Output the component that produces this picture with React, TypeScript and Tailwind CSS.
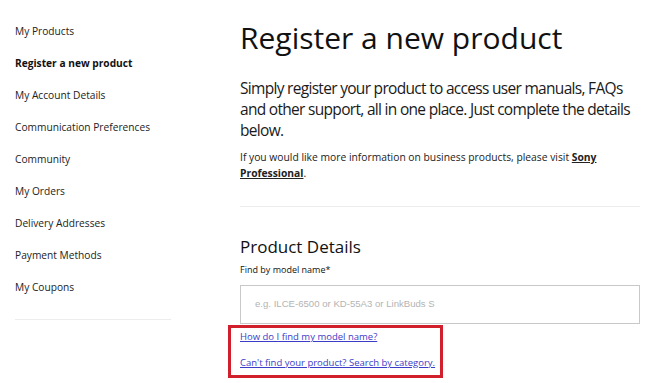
import React from 'react'

const navItems = [
  { label: 'My Products' },
  { label: 'Register a new product', active: true },
  { label: 'My Account Details' },
  { label: 'Communication Preferences' },
  { label: 'Community' },
  { label: 'My Orders' },
  { label: 'Delivery Addresses' },
  { label: 'Payment Methods' },
  { label: 'My Coupons' },
]

export default function App() {
  return (
    <main className="flex min-h-[383px] bg-white text-[#111] font-['Open_Sans',sans-serif]">
      <aside className="w-[240px] shrink-0 pl-[15px] pr-[69px] pt-[16px]">
        <ul>
          {navItems.map((item) => (
            <li
              key={item.label}
              className={`flex h-[32px] items-center text-[10.2px] ${item.active ? 'font-bold' : 'text-[#222]'}`}
            >
              {item.label}
            </li>
          ))}
        </ul>
        <div className="mt-[15px] border-t border-[#ececec]" />
      </aside>

      <section className="w-[400px] shrink-0 pt-[17px]">
        <h1 className="text-[30px] leading-[42px] font-normal">Register a new product</h1>

        <p className="mt-[19px] text-[15.5px] leading-[21px] tracking-[-0.045em] text-[#1a1a1a]">
          Simply register your product to access user manuals, FAQs and other support, all in one place. Just complete the details below.
        </p>
        <p className="mt-[8px] text-[10.3px] leading-[16px] text-[#222]">
          If you would like more information on business products, please visit{' '}
          <a className="font-bold underline">Sony</a>
          <br />
          <a className="font-bold underline">Professional</a>.
        </p>

        <div className="mt-[25px] border-t border-[#ececec]" />

        <h2 className="mt-[28px] text-[17px] leading-[24px]">Product Details</h2>
        <label className="mt-[4px] block text-[9px] leading-[14px]">Find by model name*</label>

        <div className="mt-[8px] flex h-[39px] items-center border border-[#c8c8c8] px-[14px]">
          <span className="font-['Liberation_Sans',sans-serif] text-[9.6px] text-[#b4b4b4]">
            e.g. ILCE-6500 or KD-55A3 or LinkBuds S
          </span>
        </div>

        <div className="-ml-[12px] mt-[1px] flex w-[215px] flex-col gap-[12px] border-[3px] border-[#d11f2b] pl-[9px] pr-[2px] pt-[2px] pb-[5px]">
          <a className="whitespace-nowrap text-[9.5px] leading-[14px] text-[#3c3cc8] underline">How do I find my model name?</a>
          <a className="whitespace-nowrap text-[9.5px] leading-[14px] text-[#3c3cc8] underline">Can't find your product? Search by category.</a>
        </div>
      </section>
    </main>
  )
}
